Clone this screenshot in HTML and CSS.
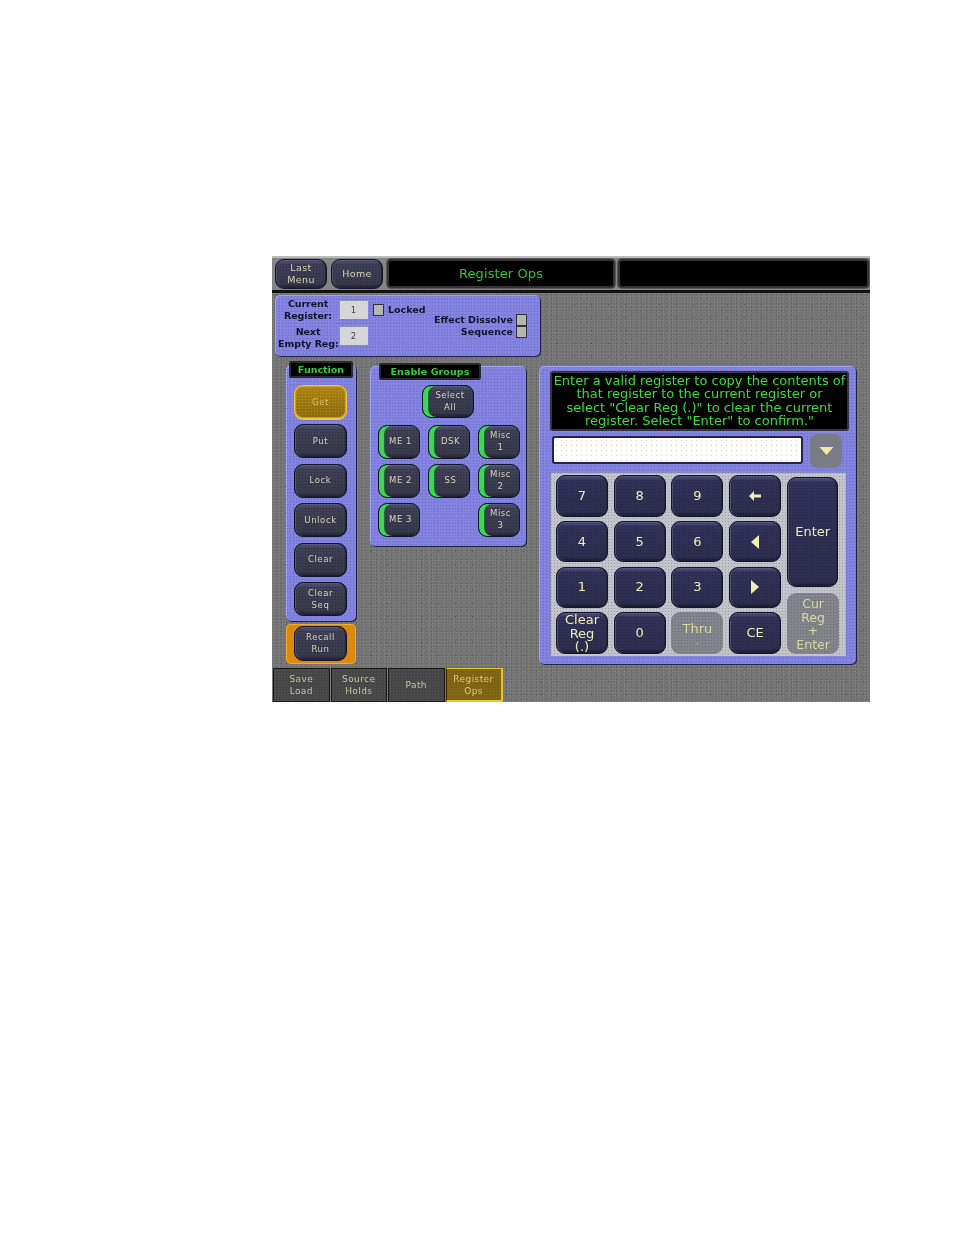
FILE: index.html
```html
<!DOCTYPE html>
<html lang="en">
<head>
<meta charset="utf-8">
<title>Register Ops</title>
<link rel="stylesheet" href="styles.css">
</head>
<body>
<main class="screen">
  <header class="topbar">
    <button class="btn top-btn">Last<br>Menu</button>
    <button class="btn top-btn">Home</button>
    <div class="top-title title-a">Register Ops</div>
    <div class="top-title title-b"></div>
  </header>
  <div class="body">
    <div class="left">
      <section class="panel reg">
        <div class="reg-col">
          <div class="reg-row"><span class="reg-label">Current<br>Register:</span><span class="reg-val">1</span><span class="check"></span><span class="reg-text">Locked</span></div>
          <div class="reg-row reg-row2"><span class="reg-label">Next<br>Empty Reg:</span><span class="reg-val">2</span></div>
        </div>
        <div class="reg-opts">
          <div class="opt"><span class="reg-text">Effect Dissolve</span><span class="check"></span></div>
          <div class="opt"><span class="reg-text">Sequence</span><span class="check"></span></div>
        </div>
      </section>
      <div class="mid">
        <div class="func-col">
          <section class="panel func">
            <h2 class="tag tag-func">Function</h2>
            <div class="func-list">
              <button class="btn fbtn btn-on">Get</button>
              <button class="btn fbtn">Put</button>
              <button class="btn fbtn">Lock</button>
              <button class="btn fbtn">Unlock</button>
              <button class="btn fbtn">Clear</button>
              <button class="btn fbtn">Clear<br>Seq</button>
            </div>
          </section>
          <div class="recall"><button class="btn rbtn">Recall<br>Run</button></div>
        </div>
        <section class="panel groups">
          <h2 class="tag tag-groups">Enable Groups</h2>
          <button class="btn gbtn select-all">Select<br>All</button>
          <div class="group-grid">
            <button class="btn gbtn">ME 1</button>
            <button class="btn gbtn">DSK</button>
            <button class="btn gbtn">Misc<br>1</button>
            <button class="btn gbtn">ME 2</button>
            <button class="btn gbtn">SS</button>
            <button class="btn gbtn">Misc<br>2</button>
            <button class="btn gbtn">ME 3</button>
            <span></span>
            <button class="btn gbtn">Misc<br>3</button>
          </div>
        </section>
      </div>
      <nav class="tabs">
        <button class="tab">Save<br>Load</button>
        <button class="tab">Source<br>Holds</button>
        <button class="tab">Path</button>
        <button class="tab tab-on">Register<br>Ops</button>
      </nav>
    </div>
    <section class="panel pad">
      <p class="msg">Enter a valid register to copy the contents of<br>that register to the current register or<br>select "Clear Reg (.)" to clear the current<br>register. Select "Enter" to confirm."</p>
      <div class="input-row">
        <div class="input"></div>
        <button class="drop"><svg class="drop-icon" viewBox="0 0 14 8"><path d="M0 0H14L7 8Z"/></svg></button>
      </div>
      <div class="keypad">
        <div class="keys">
          <button class="btn key">7</button>
          <button class="btn key">8</button>
          <button class="btn key">9</button>
          <button class="btn key"><svg class="icon-back" viewBox="0 0 12 10"><path d="M5 0V3.5H12V6.5H5V10L0 5Z"/></svg></button>
          <button class="btn key">4</button>
          <button class="btn key">5</button>
          <button class="btn key">6</button>
          <button class="btn key"><svg class="icon-tri" viewBox="0 0 8 14"><path d="M8 0V14L0 7Z"/></svg></button>
          <button class="btn key">1</button>
          <button class="btn key">2</button>
          <button class="btn key">3</button>
          <button class="btn key"><svg class="icon-tri" viewBox="0 0 8 14"><path d="M0 0V14L8 7Z"/></svg></button>
          <button class="btn key key-clear">Clear<br>Reg<br>(.)</button>
          <button class="btn key">0</button>
          <button class="key key-off key-thru">Thru<br><span class="dash">-</span></button>
          <button class="btn key key-ce">CE</button>
        </div>
        <div class="side-keys">
          <button class="btn key key-enter">Enter</button>
          <button class="key key-off key-cur">Cur<br>Reg<br>+<br>Enter</button>
        </div>
      </div>
    </section>
  </div>
</main>
</body>
</html>
```
FILE: styles.css
```css
* { box-sizing: border-box; }
html, body { margin: 0; padding: 0; background: #fff; }
body { width: 954px; height: 1235px; padding: 256px 0 0 272px; font-family: "DejaVu Sans", sans-serif; }
button { font-family: inherit; padding: 0; margin: 0; cursor: default; }

.screen {
  width: 598px; height: 446px; overflow: hidden; filter: blur(.3px);
  background-color: #747474;
  background-image:
    radial-gradient(circle, rgba(255,255,255,.16) .6px, transparent .9px),
    radial-gradient(circle, rgba(0,0,0,.14) .6px, transparent .9px),
    radial-gradient(circle, rgba(0,0,0,.35) .7px, transparent 1px);
  background-size: 3px 3px, 5px 4px, 17px 13px;
  background-position: 0 0, 2px 1px, 5px 3px;
}

.topbar {
  height: 37px; display: flex; gap: 4px; padding: 1px 1px 4px 3px;
  background-color: #858585; border-top: 2px solid #bcbcbc; border-bottom: 3px solid #111;
}
.top-btn { width: 52px; height: 30px; font-size: 9.5px; line-height: 12px; letter-spacing: .4px; padding-bottom: 1px; }
.top-title {
  height: 29px; background: #000; border: 2px solid #333; border-radius: 4px;
  color: #2fc52f; font-size: 13px; line-height: 25px; text-align: center; letter-spacing: .1px;
  box-shadow: 0 0 0 1px #5a5a5a;
}
.title-a { width: 228px; }
.title-b { width: 251px; margin-left: -1px; }

.btn {
  display: block; border: 1px solid #14142a; border-radius: 9px; color: #d4d3b2;
  background-color: #3d3d52;
  background-image:
    radial-gradient(circle, rgba(0,0,0,.28) .6px, transparent .9px),
    linear-gradient(#5c5c7c 0, #3f3f56 4px, #39394c calc(100% - 4px), #1e1e30 100%);
  background-size: 3px 3px, 100% 100%;
  text-align: center; box-shadow: inset 1px 0 0 #52526e, inset -1px 0 0 #24243a;
}

.body { display: flex; }
.left { width: 268px; padding-left: 3px; }

.panel {
  background-color: #8181e0;
  background-image:
    radial-gradient(circle, rgba(40,40,130,.25) .6px, transparent .9px),
    radial-gradient(circle, rgba(220,220,255,.25) .5px, transparent .8px);
  background-size: 3px 3px, 4px 4px;
  border-radius: 5px; box-shadow: 1px 1px 0 #22224a, inset 1px 1px 0 #a2a2f2;
}

.reg {
  width: 265px; height: 61px; margin-top: 2px; padding: 3px 13px 0 3px;
  display: flex; justify-content: space-between;
}
.reg-col { display: flex; flex-direction: column; gap: 4px; }
.reg-row { display: flex; align-items: flex-start; }
.reg-label {
  width: 60px; font-size: 9.5px; line-height: 12px; font-weight: 700; color: #14142e;
  text-align: center; letter-spacing: -.1px; white-space: nowrap;
}
.reg-row .reg-val { margin: 2px 0 0 1px; }
.reg-row2 .reg-val { margin-top: 0; }
.reg-val {
  width: 29px; height: 19px; background: #d6d6d6; border-radius: 1px; box-shadow: inset 1px 1px 0 #8f8fb0;
  color: #444; font-size: 8.5px; line-height: 20px; text-align: center; letter-spacing: .2px;
}
.check {
  width: 11px; height: 12px; background: #b5b5b5; border: 1px solid #333; display: block; flex: none;
}
.reg-row .check { margin: 6px 0 0 5px; }
.reg-text { font-size: 9.5px; font-weight: 700; line-height: 12px; color: #14142e; white-space: nowrap; }
.reg-row .reg-text { margin: 6px 0 0 4px; }
.reg-opts { display: flex; flex-direction: column; gap: 0; margin-top: 16px; align-items: flex-end; }
.opt { display: flex; gap: 3px; height: 12px; align-items: center; }

.mid { display: flex; margin-top: 5px; }
.func-col { width: 70px; margin-left: 11px; }
.func { height: 256px; margin-top: 4px; padding: 0 8px; }
.tag {
  margin: 0; height: 17px; background: #000; border: 2px solid #2a2a2a; border-radius: 2px;
  color: #2fd12f; font-size: 9.5px; font-weight: 400; line-height: 13px; text-align: center; letter-spacing: .3px;
  font-family: inherit;
}
.tag-func { width: 64px; margin-left: -5px; position: relative; top: -4px; font-weight: 700; letter-spacing: 0; }
.func-list { display: flex; flex-direction: column; gap: 5.4px; margin-top: 3px; }
.fbtn { width: 53px; height: 34px; font-size: 8.5px; line-height: 12px; letter-spacing: .6px; padding-bottom: 1px; }
.fbtn:last-child { padding: 1px 0 0; }
.btn-on {
  color: #d8c070; border-color: #f0c840; border-width: 1px;
  background-color: #96720e;
  background-image:
    radial-gradient(circle, rgba(255,220,80,.3) .6px, transparent .9px),
    linear-gradient(#a98312, #8c6a0c);
  box-shadow: 0 1px 0 #f0c840, inset 0 0 0 1px #caa020;
}
.recall {
  height: 40px; margin-top: 3px; padding: 2px 8px; background: #db8a0e; border-radius: 5px;
  box-shadow: inset 0 0 0 1px #f0ac30;
}
.rbtn { width: 53px; height: 35px; font-size: 8.5px; line-height: 12px; letter-spacing: .6px; padding-bottom: 1px; }

.groups { width: 156px; height: 180px; margin: 5px 0 0 14px; padding-left: 8px; }
.tag-groups { width: 102px; margin: -3px 0 0 1px; font-weight: 700; letter-spacing: .1px; }
.gbtn {
  font-size: 8.5px; line-height: 12px; letter-spacing: .5px; padding: 0 0 2px 4px;
  box-shadow: inset 5px 0 0 #3fd556, inset 6px 0 0 #1d6b33;
}
.select-all { width: 52px; height: 33px; margin: 5px 0 7px 44px; }
.group-grid { display: grid; grid-template-columns: repeat(3, 42px); grid-auto-rows: 34px; gap: 5px 8px; margin-left: -.5px; }

.tabs { display: flex; gap: 1px; margin: 4px 0 0 -2px; }
.tab {
  width: 56.5px; height: 34px; border: 1px solid #1a1a1a; color: #c4c3a2; font-size: 9px; line-height: 12px;
  background-color: #464646;
  background-image: radial-gradient(circle, rgba(255,255,255,.1) .6px, transparent .9px);
  background-size: 3px 3px; letter-spacing: .4px;
}
.tab-on {
  color: #e0cc70; background-color: #7f6212; border-color: #3a2c06; width: 57px;
  border-top-color: #e8c528; border-right: 2px solid #e8c528; border-bottom: 2px solid #e8c528;
}

.pad { width: 317px; height: 298px; margin: 73px 0 0 -1px; padding: 5px 7px 0 11px; }
.msg {
  width: 299px; height: 60px; margin: 0; background: #000; border: 2px solid #34344a; border-radius: 3px;
  color: #3ade3a; font-size: 13px; line-height: 13.4px; text-align: center; white-space: nowrap; padding-top: 1px;
}
.input-row { display: flex; margin: 5px 0 5px 2px; align-items: flex-start; height: 31px; }
.input {
  width: 251px; height: 28px; background: #fff; border: 2px solid #22224a; border-radius: 3px;
  background-image: radial-gradient(circle, #d4d4d4 .5px, transparent .8px); background-size: 5px 5px;
}
.drop {
  width: 32px; height: 34px; margin: -2px 0 0 7px; background: #7b7b86; border: 0; border-radius: 8px;
  display: flex; align-items: center; justify-content: center;
}
.drop-icon { width: 15px; height: 8px; fill: #efe9a5; }

.keypad {
  width: 296px; height: 184px; background-color: #c3c3cc; padding: 3px 7px 0 6px;
  background-image: radial-gradient(circle, rgba(70,70,90,.3) .6px, transparent .9px);
  background-size: 3px 3px; display: flex; gap: 6px; box-shadow: inset 1px 1px 0 #8a8ab8;
}
.keys { display: grid; grid-template-columns: repeat(4, 52px); grid-auto-rows: 41.5px; gap: 4.3px 5.7px; width: 226px; }
.key {
  color: #efeeb6; font-size: 13px; line-height: 14px; display: flex; align-items: center; justify-content: center;
  text-align: center; border-radius: 9px;
}
.btn.key {
  background-color: #2f2f52;
  background-image:
    radial-gradient(circle, rgba(0,0,0,.25) .6px, transparent .9px),
    linear-gradient(#5a5a88 0, #32325a 4px, #2d2d4e calc(100% - 4px), #1b1b33 100%);
}
.key-off {
  border: 0; display: block; padding: 0; color: #d8d8a0; background-color: #84848c;
  background-image: radial-gradient(circle, rgba(0,0,0,.18) .6px, transparent .9px); background-size: 3px 3px;
}
.key-clear { display: block; padding-top: 0; line-height: 13.5px; }
.key-thru { padding-top: 4px; line-height: 13px; }
.dash { color: #a3a38c; font-size: 10px; }
.side-keys { width: 52px; display: flex; flex-direction: column; gap: 6px; padding-top: 2px; }
.key-enter { height: 110px; width: 51px; }
.key-cur { height: 61px; font-size: 12.5px; line-height: 13.5px; padding-top: 1px; }
.icon-back { width: 12px; height: 10px; fill: #efeeb6; }
.icon-tri { width: 8px; height: 14px; fill: #efeeb6; }
```
